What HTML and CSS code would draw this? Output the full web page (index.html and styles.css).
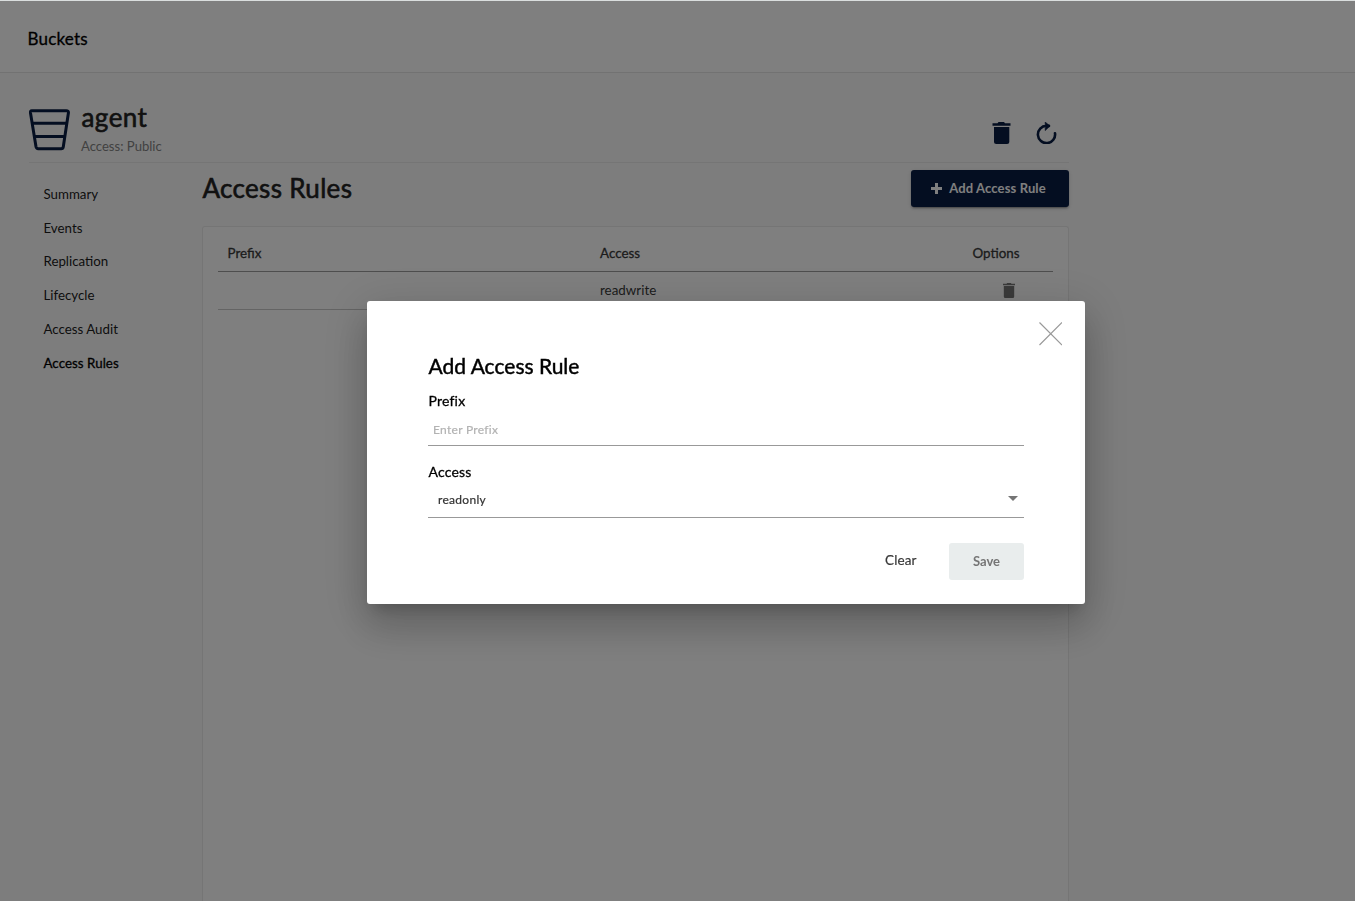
FILE: index.html
```html
<!DOCTYPE html>
<html lang="en">
<head>
<meta charset="utf-8">
<title>Buckets</title>
<link rel="stylesheet" href="styles.css">
</head>
<body>
<div class="page">
  <header class="topbar"><span class="topbar-title">Buckets</span></header>
  <main class="content">
    <section class="bucket-head">
      <svg class="bucket-icon" width="42" height="42" viewBox="0 0 42 42" fill="none" stroke="#081c42" stroke-width="3" stroke-linejoin="round"><path d="M2.8 1.7H37.2Q39.8 1.7 39.4 4L34.3 37.8Q34 39.7 32.2 39.7H9.2Q7.4 39.7 7 37.8L1.5 4Q1.2 1.7 2.8 1.7Z"/><path d="M3.4 14.3H37.6M5.6 27.6H35.6"/></svg>
      <div class="bucket-info">
        <h1 class="bucket-name">agent</h1>
        <p class="bucket-access">Access: Public</p>
      </div>
      <div class="bucket-actions">
        <svg width="20" height="22" viewBox="0 0 20 22" fill="#081c42"><path d="M.5 1.3H5.5L6.5 0H12L13 1.3H18.5V3.8H.5ZM2 5H17.3V19.5A2.3 2.3 0 0 1 15 22H4.3A2.3 2.3 0 0 1 2 19.5Z"/></svg>
        <svg width="21" height="22" viewBox="0 0 21 22" fill="none" stroke="#081c42" stroke-width="2.6"><path d="M19 11.2A8.6 8.6 0 1 1 10.4 3.9H13" stroke-linecap="round"/><path d="M9.2 0L14 4.1L9.2 8.6V6L11 4.1L9.2 2.4Z" fill="#081c42" stroke-width=".6"/></svg>
      </div>
    </section>
    <div class="columns">
      <nav class="side">
        <a class="side-item">Summary</a>
        <a class="side-item">Events</a>
        <a class="side-item">Replication</a>
        <a class="side-item">Lifecycle</a>
        <a class="side-item">Access Audit</a>
        <a class="side-item side-active">Access Rules</a>
      </nav>
      <section class="rules">
        <div class="rules-head">
          <h2 class="rules-title">Access Rules</h2>
          <button class="add-button"><svg width="11" height="11" viewBox="0 0 11 11"><path d="M5.5 0V11M0 5.5H11" stroke="#fff" stroke-width="3"/></svg>Add Access Rule</button>
        </div>
        <div class="table">
          <div class="row row-head"><span>Prefix</span><span>Access</span><span>Options</span></div>
          <div class="row row-body"><span></span><span class="row-access">readwrite</span><span class="row-option"><svg width="12" height="15" viewBox="0 0 12 15" fill="#757575"><path d="M0 .8H3.5L4.2 0H7.8L8.5 .8H12V2.2H0ZM.8 3H11.2V13.5A1.5 1.5 0 0 1 9.7 15H2.3A1.5 1.5 0 0 1 .8 13.5Z"/></svg></span></div>
        </div>
      </section>
    </div>
  </main>
</div>
<div class="backdrop">
  <div class="dialog">
    <svg class="close" width="24" height="24" viewBox="0 0 24 24"><path d="M.5 .5L23.5 23.5M23.5 .5L.5 23.5" stroke="#999" stroke-width="1.2"/></svg>
    <h2 class="dialog-title">Add Access Rule</h2>
    <label class="label">Prefix</label>
    <div class="field field-prefix">Enter Prefix</div>
    <label class="label label-access">Access</label>
    <div class="field field-select">readonly<svg width="10" height="5" viewBox="0 0 10 5"><path d="M0 0H10L5 5Z" fill="#757575"/></svg></div>
    <div class="dialog-actions">
      <button class="clear">Clear</button>
      <button class="save">Save</button>
    </div>
  </div>
</div>
</body>
</html>
```
FILE: styles.css
```css
* { box-sizing: border-box; }
html, body { height: 100%; overflow: hidden; }
body { margin: 0; font-family: Lato, sans-serif; font-size: 13px; color: #000; background: #fbfbfb; }
h1, h2, p { margin: 0; font-weight: 400; }
button { border: 0; font-family: inherit; }
svg { display: block; flex: none; }
/* Medium weight, between the regular and bold faces */
.topbar-title, .side-active, .row-head, .label { -webkit-text-stroke: .3px currentColor; }
.field, .clear { -webkit-text-stroke: .2px currentColor; }
.bucket-name, .rules-title, .dialog-title { -webkit-text-stroke: .6px currentColor; }
.page { height: 901px; display: flex; flex-direction: column; background: #fbfbfb; }
.topbar { height: 73px; flex: none; display: flex; align-items: center; padding: 3px 0 0 27.5px; background: #fff; border-top: 1px solid #dadede; border-bottom: 1px solid #e5e5e5; }
.topbar-title { font-size: 17px; letter-spacing: .2px; }
.content { flex: 1; width: 1040px; margin-left: 29px; display: flex; flex-direction: column; }
.bucket-head { height: 90px; flex: none; display: flex; border-bottom: 1px solid #eaeaea; }
.bucket-icon { margin: 36px 10px 0 0; }
.bucket-info { padding-top: 28px; }
.bucket-name { font-size: 26px; line-height: 32px; letter-spacing: .45px; padding-left: .5px; color: #222; }
.bucket-access { font-size: 13.1px; line-height: 16px; margin-top: 5px; color: #838383; }
.bucket-actions { display: flex; gap: 24px; margin: 49px 12px 0 auto; }
.columns { flex: 1; display: flex; }
.side { width: 173px; display: flex; flex-direction: column; padding: 14px 0 0 14.5px; }
.side-item { height: 33.7px; line-height: 34px; font-size: 13.3px; color: #1c1c1c; }
.side-active { color: #000; padding-top: .5px; letter-spacing: .05px; }
.rules { flex: 1; display: flex; flex-direction: column; padding-top: 7px; }
.rules-head { height: 56px; display: flex; justify-content: space-between; align-items: flex-start; }
.rules-title { font-size: 26px; line-height: 36px; letter-spacing: .32px; padding-left: .5px; color: #222; }
.add-button { width: 158px; height: 37px; display: flex; align-items: center; justify-content: center; gap: 7px; padding: 0 9px 1px 6px; background: #081c42; color: #fff; border-radius: 3px; font-size: 13px; font-weight: 700; letter-spacing: .13px; box-shadow: 0 3px 1px -2px rgba(0,0,0,.2), 0 2px 2px rgba(0,0,0,.14), 0 1px 5px rgba(0,0,0,.12); }
.table { flex: 1; padding: 8px 15px 0; background: #fff; border: 1px solid #eaeaea; border-bottom: 0; border-radius: 3px 3px 0 0; }
.row { display: grid; grid-template-columns: 372.5px 372.5px 1fr; align-items: center; padding-left: 9.5px; font-size: 13.4px; }
.row-head { height: 37px; color: #393939; border-bottom: 1px solid #9c9c9c; }
.row-body { height: 38px; color: #393939; border-bottom: 1px solid #c8c8c8; }
.row-access { padding-bottom: 2px; }
.row-option { padding-left: 30px; }
.backdrop { position: fixed; inset: 1px 0 0; background: rgba(0,0,0,.5); }
.dialog { position: absolute; left: 367px; top: 300px; width: 718px; height: 303px; padding: 51px 61px 0; background: #fff; border-radius: 3px; box-shadow: 0 11px 15px -7px rgba(0,0,0,.2), 0 24px 38px 3px rgba(0,0,0,.14), 0 9px 46px 8px rgba(0,0,0,.12); }
.close { position: absolute; top: 21px; right: 23px; width: 23.5px; height: 23.5px; }
.dialog-title { font-size: 21px; line-height: 28px; padding-left: .5px; -webkit-text-stroke-width: .45px; }
.label { display: block; margin-top: 12px; padding-left: .5px; font-size: 14px; letter-spacing: .2px; line-height: 18px; }
.field { display: flex; align-items: center; height: 36px; font-size: 12px; letter-spacing: .3px; border-bottom: 1px solid #999; }
.field-prefix { color: #b3b3b3; padding: 4px 0 1px 5px; }
.label-access { margin-top: 17px; }
.field-select { height: 37px; justify-content: space-between; padding: 0 6.5px 0 10px; color: #333; }
.field-select svg { margin-bottom: 1px; }
.dialog-actions { display: flex; justify-content: flex-end; margin-top: 25px; }
.clear { height: 37px; padding: 0 32.5px 3px; background: none; font-size: 13.5px; letter-spacing: .1px; color: #393939; }
.save { width: 75px; height: 37px; padding-bottom: 2px; background: #e9eded; color: #757575; border-radius: 3px; font-size: 13px; font-weight: 700; }
```
